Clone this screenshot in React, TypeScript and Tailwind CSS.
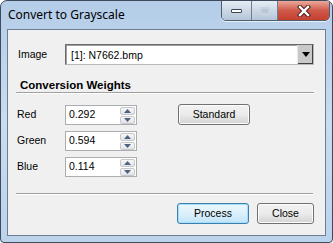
import { useState } from 'react';

const ui = { fontFamily: '"Liberation Sans", Arial, sans-serif' };
const titleFont = { fontFamily: '"Noto Sans", "Open Sans", sans-serif' };

function Spinner() {
  return (
    <div className="flex flex-col w-[15px] h-[17px] mr-[1px] gap-[1px]">
      {[0, 1].map((i) => (
        <div
          key={i}
          className="flex-1 flex items-center justify-center border border-[#c6c8cc] rounded-[2px] bg-gradient-to-b from-[#f7f7f7] to-[#e4e4e4]"
        >
          <svg width="7" height="4" viewBox="0 0 7 4">
            {i === 0 ? (
              <path d="M0 4 L3.5 0 L7 4 Z" fill="#4d6185" />
            ) : (
              <path d="M0 0 L3.5 4 L7 0 Z" fill="#4d6185" />
            )}
          </svg>
        </div>
      ))}
    </div>
  );
}

function WeightRow({ label, value }: { label: string; value: string }) {
  const [v, setV] = useState(value);
  return (
    <div className="flex items-center h-[20px]">
      <span className="w-[48px] text-[10.5px] text-black">{label}</span>
      <div className="w-[72px] h-[20px] flex items-center border border-[#abadb3] bg-white">
        <input
          value={v}
          onChange={(e) => setV(e.target.value)}
          className="flex-1 min-w-0 pl-[3px] text-[10.5px] text-black outline-none bg-transparent"
          style={ui}
        />
        <Spinner />
      </div>
    </div>
  );
}

function WinButton({ label, primary }: { label: string; primary?: boolean }) {
  return (
    <button
      type="button"
      className={`h-[21px] rounded-[3px] border text-[10.5px] text-black ${
        primary
          ? 'border-[#3c7fb1] bg-gradient-to-b from-[#ecf7fd] via-[#dcf0fb] to-[#bfe4f9] shadow-[inset_0_0_0_1px_#a8dcf7]'
          : 'border-[#707070] bg-gradient-to-b from-[#f2f2f2] via-[#ebebeb] to-[#d3d3d3] shadow-[inset_0_0_0_1px_#fcfcfc]'
      }`}
      style={ui}
    >
      {label}
    </button>
  );
}

export default function App() {
  return (
    <div className="w-[333px] h-[243px] bg-white">
      <div className="w-[333px] h-[243px] flex flex-col rounded-t-[7px] rounded-b-[4px] border border-[#3d4b5c] bg-gradient-to-b from-[#b4cde8] via-[#c9dcf0] to-[#bcd3ec] overflow-hidden">
        {/* title bar */}
        <div className="h-[28px] flex items-start relative shrink-0">
          <span className="pl-[7px] pt-[6px] text-[12px] text-black leading-[16px]" style={titleFont}>
            Convert to Grayscale
          </span>
          <div className="absolute right-[2px] top-[-1px] flex h-[21px] rounded-b-[5px] border border-[#4e5d70] overflow-hidden shadow-[0_1px_0_#e8f0f8]">
            <div className="w-[30px] flex items-center justify-center bg-gradient-to-b from-[#e6edf5] via-[#cdd8e5] to-[#b5c5d8] border-r border-[#6f7f92]">
              <div className="w-[11px] h-[4px] bg-white border border-[#3a4656] rounded-[1px]" />
            </div>
            <div className="w-[26px] flex items-center justify-center bg-gradient-to-b from-[#e6edf5] via-[#cdd8e5] to-[#b5c5d8] border-r border-[#6f7f92]">
              <div className="w-[10px] h-[8px] border-2 border-[#c8d3e0] bg-[#b9c6d6]" />
            </div>
            <div className="w-[51px] flex items-center justify-center bg-gradient-to-b from-[#e9a99c] via-[#d0584a] to-[#c4402f]">
              <svg width="14" height="12" viewBox="0 0 14 12">
                <path d="M3 2 L11 10 M11 2 L3 10" stroke="#4b2020" strokeWidth="4.4" strokeLinecap="square" />
                <path d="M3 2 L11 10 M11 2 L3 10" stroke="#ffffff" strokeWidth="2.4" strokeLinecap="square" />
              </svg>
            </div>
          </div>
        </div>

        {/* client area */}
        <div className="mx-[6px] h-[207px] border border-[#6e7d8f] bg-[#f0f0f0] flex flex-col pl-[9px]" style={ui}>
          <div className="flex items-center mt-[14px] h-[21px]">
            <span className="w-[48px] text-[10.5px] text-black pl-[1px]">Image</span>
            <div className="w-[249px] h-[21px] flex border border-[#6b6b6b] border-b-[#b9b9b9] border-r-[#b9b9b9] bg-white">
              <div className="flex-1 pl-[4px] text-[10.5px] leading-[19px] text-black border border-[#a0a0a0] border-r-0 border-b-0">
                [1]: N7662.bmp
              </div>
              <div className="w-[16px] flex items-center justify-center bg-[#c9c9c9] border-l border-[#e8e8e8] shadow-[inset_-1px_-1px_0_#404040]">
                <svg width="8" height="5" viewBox="0 0 8 5">
                  <path d="M0 0 L8 0 L4 5 Z" fill="#000" />
                </svg>
              </div>
            </div>
          </div>

          <div className="mt-[13px] pl-[3px] text-[11.5px] font-bold text-black leading-[14px]">Conversion Weights</div>
          <div className="ml-[-1px] w-[298px] h-[2px] border-t border-[#a0a0a0] border-b border-b-white" />

          <div className="flex mt-[11px]">
            <div className="flex flex-col gap-[6px]">
              <WeightRow label="Red" value="0.292" />
              <WeightRow label="Green" value="0.594" />
              <WeightRow label="Blue" value="0.114" />
            </div>
            <div className="ml-[41px] mt-[-1px] w-[72px] flex flex-col">
              <WinButton label="Standard" />
            </div>
          </div>

          <div className="mt-[16px] ml-[-1px] w-[297px] h-[2px] border-t border-[#a0a0a0] border-b border-b-white" />

          <div className="flex mt-[8px] ml-[160px] gap-[8px]">
            <div className="w-[72px] flex flex-col">
              <WinButton label="Process" primary />
            </div>
            <div className="w-[57px] flex flex-col">
              <WinButton label="Close" />
            </div>
          </div>
        </div>
      </div>
    </div>
  );
}
